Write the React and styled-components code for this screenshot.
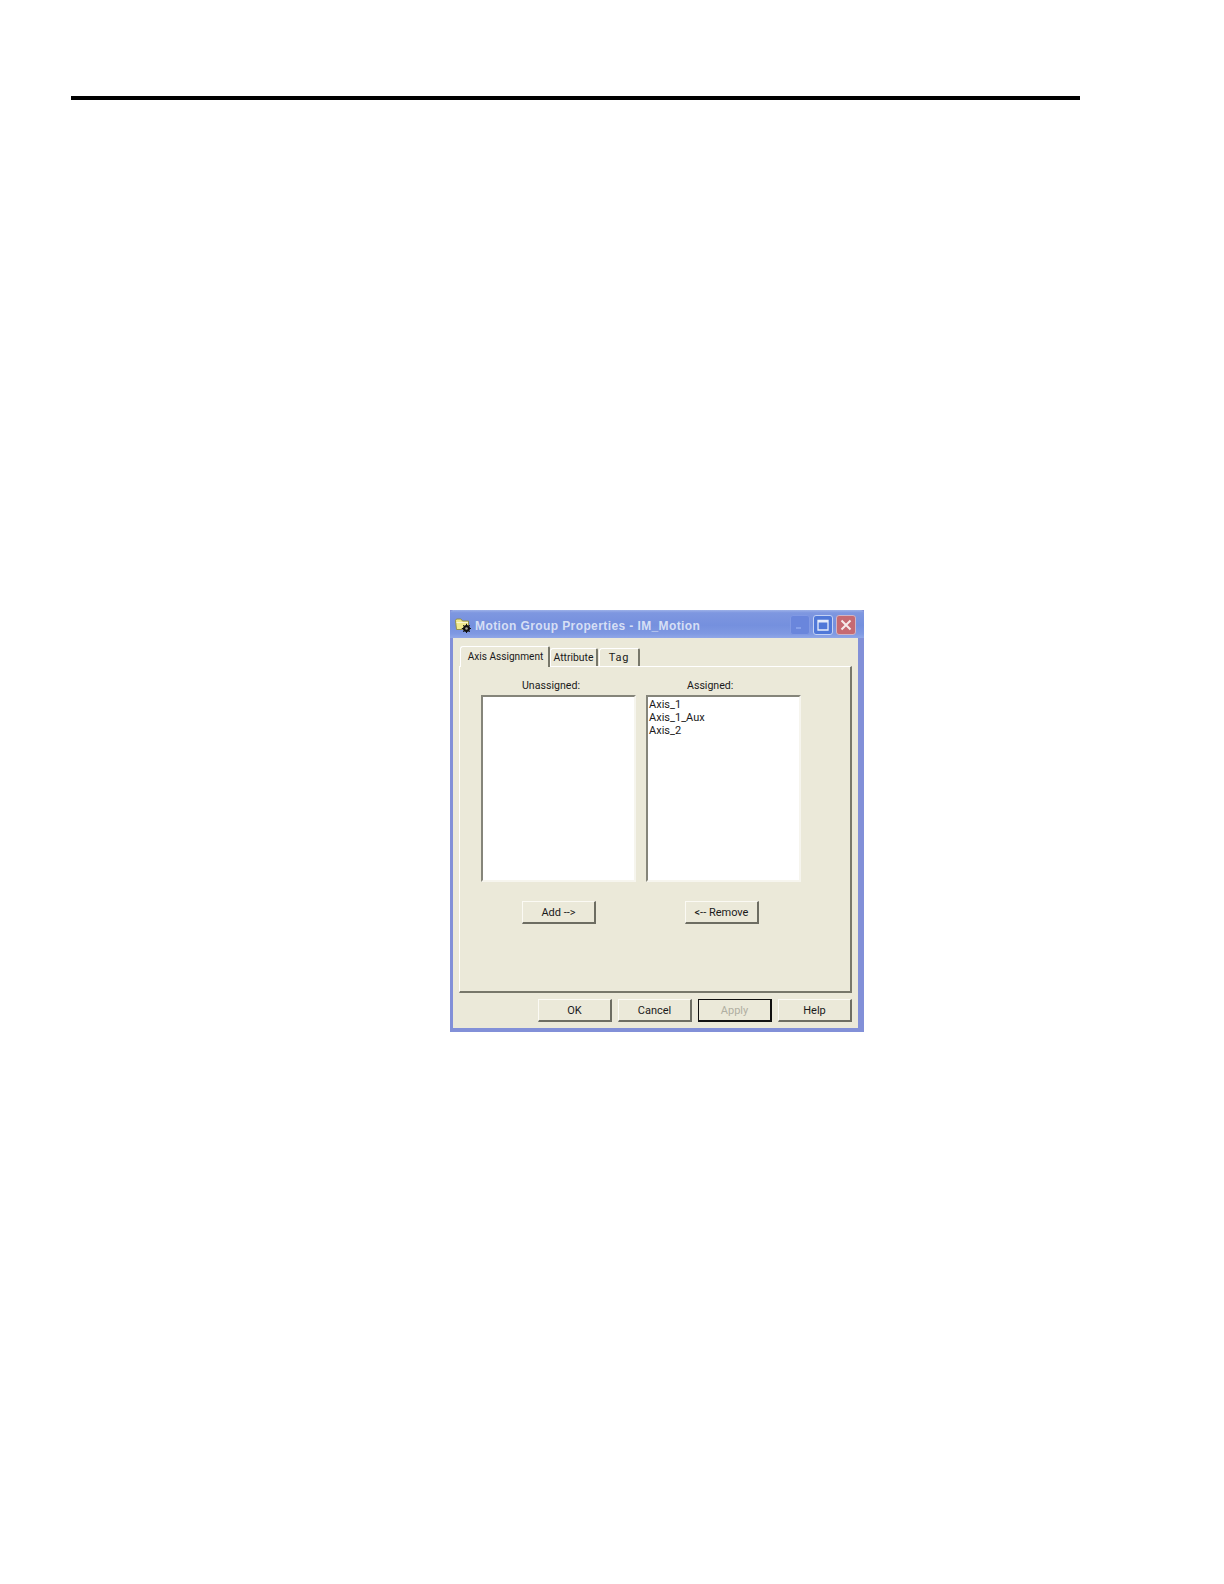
import styled, { createGlobalStyle } from "styled-components";

const GlobalStyle = createGlobalStyle`
  body {
    margin: 0;
    background: #ffffff;
    font-family: Roboto, "Liberation Sans", Arial, sans-serif;
  }
`;

const Page = styled.div`
  width: 1224px;
  height: 1584px;
  padding: 96px 0 0 71px;
  box-sizing: border-box;
  overflow: hidden;
`;

const Rule = styled.hr`
  width: 1009px;
  height: 4px;
  margin: 0;
  border: 0;
  background: #000000;
`;

const Dialog = styled.section`
  width: 414px;
  height: 422px;
  margin: 510px 0 0 379px;
  box-sizing: border-box;
  display: flex;
  flex-direction: column;
  border: solid #8290d8;
  border-width: 0 6px 4px 3px;
  background: #ebe9d9;
  color: #1a1a1a;
  font-size: 11px;
`;

const TitleBar = styled.header`
  height: 28px;
  margin: 0 -6px 0 -3px;
  padding: 2px 8px 0 5px;
  box-sizing: border-box;
  display: flex;
  align-items: center;
  flex: none;
  border-radius: 4px 4px 0 0;
  background: linear-gradient(180deg, #9db1e8 0%, #7e97e0 10%, #7590de 55%, #7f99e2 85%, #90a7e8 100%);
`;

const TitleText = styled.h1`
  flex: 1;
  margin: 1px 0 0 4px;
  color: #d6dff5;
  font-family: "Liberation Sans", Arial, sans-serif;
  font-size: 12px;
  font-weight: 700;
  letter-spacing: 0.4px;
  white-space: pre;
`;

const WindowButton = styled.span`
  width: 20px;
  height: 20px;
  margin-left: 3px;
  box-sizing: border-box;
  display: flex;
  align-items: center;
  justify-content: center;
  border: 1px solid ${(p) => (p.$close ? "#d0b4c4" : p.$dim ? "#8199e4" : "#c4d2f4")};
  border-radius: 3px;
  background: ${(p) => (p.$close ? "#c66a72" : p.$dim ? "#6a86dc" : "#5078d8")};
`;

const DialogBody = styled.div`
  flex: 1;
  padding: 8px 6px 0;
  display: flex;
  flex-direction: column;
`;

const TabStrip = styled.nav`
  height: 20px;
  padding-left: 1px;
  display: flex;
  align-items: flex-end;
  position: relative;
  z-index: 1;
`;

const Tab = styled.div`
  height: ${(p) => (p.$active ? "21px" : "18px")};
  width: ${(p) => p.$width}px;
  margin-right: ${(p) => p.$gap}px;
  margin-bottom: ${(p) => (p.$active ? "-1px" : "0")};
  padding: ${(p) => (p.$active ? "3px 0 0 2px" : "2px 0 0")};
  box-sizing: border-box;
  text-align: center;
  line-height: 13px;
  font-size: ${(p) => p.$size}px;
  letter-spacing: ${(p) => p.$spacing || 0}px;
  background: #ebe9d9;
  border-top: 1px solid #ffffff;
  border-left: 1px solid #ffffff;
  border-right: 2px solid #77776a;
  border-radius: 3px 2px 0 0;
`;

const TabPanel = styled.div`
  width: 393px;
  height: 327px;
  box-sizing: border-box;
  padding: 12px 0 0 21px;
  display: grid;
  grid-template-columns: 155px 155px;
  column-gap: 10px;
  align-content: start;
  border-style: solid;
  border-width: 1px 2px 2px 1px;
  border-color: #ffffff #77776a #77776a #ffffff;
`;

const ListColumn = styled.div`
  display: flex;
  flex-direction: column;
`;

const ListLabel = styled.label`
  height: 16px;
  padding-left: 41px;
  line-height: 13px;
  font-size: 10.6px;
`;

const ListBox = styled.div`
  height: 187px;
  box-sizing: border-box;
  padding: 1px 0 0 1px;
  display: flex;
  flex-direction: column;
  background: #ffffff;
  border: 2px solid;
  border-color: #85857a #f6f5ee #f6f5ee #85857a;
  line-height: 13px;
`;

const ListItem = styled.div`
  height: 13px;
`;

const Button = styled.button`
  width: 74px;
  height: 23px;
  padding: 0;
  flex: none;
  background: #ebe9d9;
  border: 1px solid;
  border-color: #fbfaf4 #6d6d62 #6d6d62 #fbfaf4;
  border-right-width: 2px;
  border-bottom-width: 2px;
  color: #1a1a1a;
  font: inherit;

  &:disabled {
    color: #b0afa2;
    border-color: #111111;
  }
`;

const ColumnButton = styled(Button)`
  margin: 19px 0 0 ${(p) => p.$indent}px;
`;

const ButtonRow = styled.div`
  width: 393px;
  margin-top: 6px;
  display: flex;
  justify-content: flex-end;
  gap: 6px;
`;

function FolderIcon() {
  return (
    <svg width="16" height="15" viewBox="0 0 16 15">
      <path d="M0.5 2.5 L1.5 1 H6 L7.5 3 H13.5 V11.5 H1.5 Z" fill="#f0e98c" stroke="#8f8a3e" strokeWidth="0.9" />
      <path d="M1.5 4.5 H13" stroke="#fbf7cf" strokeWidth="1" />
      <circle cx="11.5" cy="10.5" r="3.5" fill="#111111" />
      <path d="M11.5 5.8v9.4M6.8 10.5h9.4M8.2 7.2l6.6 6.6M14.8 7.2l-6.6 6.6" stroke="#111111" strokeWidth="1" />
      <circle cx="11.5" cy="10.5" r="1.3" fill="#a9a998" />
    </svg>
  );
}

export default function App() {
  return (
    <Page>
      <GlobalStyle />
      <Rule />
      <Dialog>
        <TitleBar>
          <FolderIcon />
          <TitleText>Motion Group Properties - IM_Motion</TitleText>
          <WindowButton $dim>
            <svg width="12" height="12" viewBox="0 0 12 12">
              <rect x="2" y="8" width="5" height="2" fill="#86a0ea" />
            </svg>
          </WindowButton>
          <WindowButton>
            <svg width="14" height="14" viewBox="0 0 14 14">
              <path d="M2 2.5h10v9.5H2z" fill="none" stroke="#e6edfb" strokeWidth="1.3" />
              <path d="M2 3.5h10" stroke="#e6edfb" strokeWidth="2" />
            </svg>
          </WindowButton>
          <WindowButton $close>
            <svg width="14" height="14" viewBox="0 0 14 14">
              <path d="M2.5 2.5l9 9M11.5 2.5l-9 9" stroke="#f6eaea" strokeWidth="2" />
            </svg>
          </WindowButton>
        </TitleBar>
        <DialogBody>
          <TabStrip>
            <Tab $active $width={90} $gap={0} $size={10.1}>Axis Assignment</Tab>
            <Tab $width={48} $gap={1} $size={10.4}>Attribute</Tab>
            <Tab $width={41} $gap={0} $size={11} $spacing={0.8}>Tag</Tab>
          </TabStrip>
          <TabPanel>
            <ListColumn>
              <ListLabel>Unassigned:</ListLabel>
              <ListBox />
              <ColumnButton $indent={41}>Add --&gt;</ColumnButton>
            </ListColumn>
            <ListColumn>
              <ListLabel>Assigned:</ListLabel>
              <ListBox>
                <ListItem>Axis_1</ListItem>
                <ListItem>Axis_1_Aux</ListItem>
                <ListItem>Axis_2</ListItem>
              </ListBox>
              <ColumnButton $indent={39}>&lt;-- Remove</ColumnButton>
            </ListColumn>
          </TabPanel>
          <ButtonRow>
            <Button>OK</Button>
            <Button>Cancel</Button>
            <Button disabled>Apply</Button>
            <Button>Help</Button>
          </ButtonRow>
        </DialogBody>
      </Dialog>
    </Page>
  );
}
